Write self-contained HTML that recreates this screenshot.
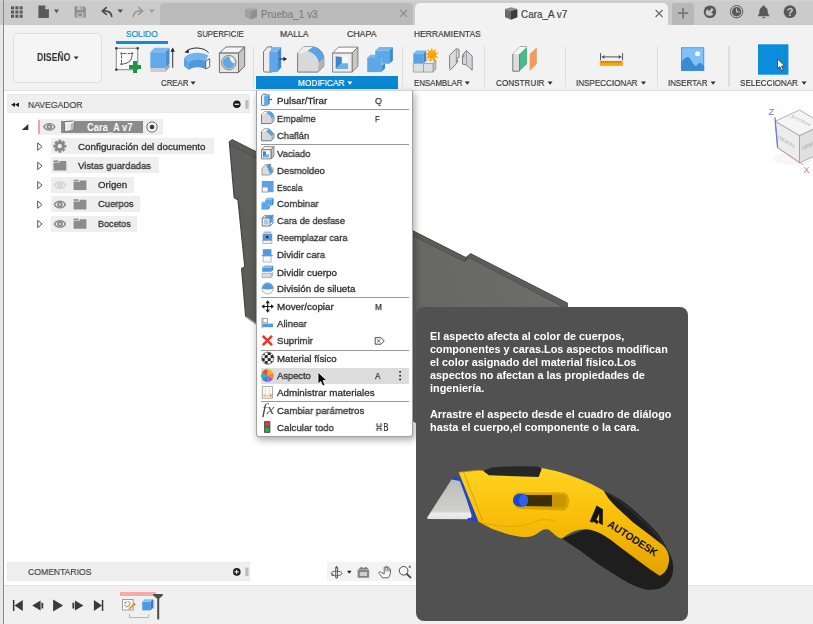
<!DOCTYPE html>
<html lang="es">
<head>
<meta charset="utf-8">
<title>Autodesk Fusion 360 - Cara_A v7</title>
<style>
html,body{margin:0;padding:0;background:#fff;}
body{width:813px;height:624px;overflow:hidden;position:relative;font-family:"Liberation Sans",sans-serif;}
#app{position:absolute;left:0;top:0;width:813px;height:624px;overflow:hidden;background:#fff;}
.b{position:absolute;box-sizing:border-box;}
.t{will-change:transform;position:absolute;white-space:nowrap;transform-origin:0 50%;letter-spacing:0;}
svg{position:absolute;left:0;top:0;overflow:visible;}
</style>
</head>
<body>
<div id="app">
<!-- ===== top application bar ===== -->
<div class="b" style="left:0;top:0;width:813px;height:24.5px;background:#cbcbcb;"></div>
<div class="b" style="left:0;top:0;width:813px;height:2px;background:linear-gradient(#d3d3d3,#cbcbcb);"></div>
<!-- inactive tab -->
<div class="b" style="left:160px;top:2.5px;width:252.5px;height:22px;background:#bababa;border-radius:4px 4px 0 0;"></div>
<!-- active tab -->
<div class="b" style="left:415.4px;top:2.5px;width:252.6px;height:23px;background:#f2f2f2;border-radius:5px 5px 0 0;"></div>
<!-- new tab button -->
<div class="b" style="left:672px;top:2.5px;width:21.7px;height:22px;background:#b8b8b8;border-radius:3px 3px 0 0;"></div>

<!-- ===== toolbar ===== -->
<div class="b" style="left:0;top:24.5px;width:813px;height:66.2px;background:#f2f2f2;border-bottom:1px solid #e0e0e0;"></div>
<div class="b" style="left:13.3px;top:33.3px;width:88.6px;height:49.4px;background:#f5f5f5;border:1px solid #dedede;border-radius:5px;"></div>
<div class="b" style="left:115.6px;top:41.3px;width:52.4px;height:2.5px;background:#0c8fd6;"></div>
<!-- group separators -->
<div class="b" style="left:253px;top:46px;width:1.2px;height:41px;background:#dedede;"></div>
<div class="b" style="left:401.5px;top:46px;width:1.2px;height:41px;background:#dedede;"></div>
<div class="b" style="left:484px;top:46px;width:1.2px;height:41px;background:#dedede;"></div>
<div class="b" style="left:564.6px;top:46px;width:1.2px;height:41px;background:#dedede;"></div>
<div class="b" style="left:656.5px;top:46px;width:1.2px;height:41px;background:#dedede;"></div>
<div class="b" style="left:728.4px;top:46px;width:1.2px;height:41px;background:#dedede;"></div>
<!-- MODIFICAR active -->
<div class="b" style="left:256.3px;top:76.3px;width:142px;height:13px;background:#0b86d3;"></div>

<!-- ===== 3D model in canvas ===== -->
<svg width="813" height="624" viewBox="0 0 813 624">
  <defs>
    <linearGradient id="mg" gradientUnits="userSpaceOnUse" x1="229" y1="330" x2="560" y2="200">
      <stop offset="0" stop-color="#595957"/><stop offset=".5" stop-color="#666664"/><stop offset="1" stop-color="#6f6f6c"/>
    </linearGradient>
  </defs>
  <!-- main face -->
  <path d="M229.3 141.6 L234.2 197.6 L238 200.1 L244.8 266.7 L241.6 268.6 L245.7 316.7 L256.6 324.4 L300 350 L418 424.5 L600 424.5 L600 312 L567.4 312 L567.4 303 L470.7 253.6 L465.8 257.4 L232.3 139.6 Z" fill="url(#mg)"/>
  <!-- thickness strip along the top edge -->
  <path d="M229.3 141.6 L232.3 139.6 L465.8 257.4 L470.7 253.6 L567.4 303 L567.4 307.4 L564 307.4 L469.6 257.6 L464.6 261.4 L230.4 144.6 Z" fill="#5c5c5a"/>
  <path d="M229.3 141.6 L232.3 139.6 L465.8 257.4 L470.7 253.6 L567.4 303 V307.4" fill="none" stroke="#3c3c3a" stroke-width=".7" stroke-linejoin="round"/>
  <path d="M230.4 144.8 L464.6 261.6 L469.6 257.8 L564 307.4" fill="none" stroke="#444442" stroke-width=".6" stroke-linejoin="round"/>
  <path d="M465.8 257.4 L464.8 261.4" fill="none" stroke="#444442" stroke-width=".8"/>
  <!-- left silhouette -->
  <path d="M229.3 141.6 L234.2 197.6 L238 200.1 L244.8 266.7 L241.6 268.6 L245.7 316.7" fill="none" stroke="#454543" stroke-width="1.2" stroke-linejoin="round"/>
  <path d="M245.7 316.7 L256.6 324.4" fill="none" stroke="#a5a5a2" stroke-width="1.4"/>
</svg>

<!-- ===== navigator panel ===== -->
<div class="b" style="left:7.4px;top:94.4px;width:242.2px;height:19px;background:#efefef;border:1px solid #eaeaea;"></div>
<div class="b" style="left:38px;top:120px;width:1.7px;height:14px;background:#f4a3a3;"></div>
<div class="b" style="left:39.7px;top:119.4px;width:123.3px;height:15.4px;background:#efefef;"></div>
<div class="b" style="left:61px;top:120.7px;width:81.7px;height:12.4px;background:#8b8b8b;"></div>
<div class="b" style="left:51px;top:137.9px;width:162.6px;height:15.8px;background:#efefef;"></div>
<div class="b" style="left:51px;top:157.3px;width:108.4px;height:15.8px;background:#efefef;"></div>
<div class="b" style="left:51px;top:176.9px;width:83px;height:15.8px;background:#efefef;"></div>
<div class="b" style="left:51px;top:196.4px;width:89.2px;height:15.8px;background:#efefef;"></div>
<div class="b" style="left:51px;top:215.9px;width:86px;height:15.8px;background:#efefef;"></div>

<!-- ===== bottom bars ===== -->
<div class="b" style="left:7.4px;top:562.4px;width:242.2px;height:19px;background:#efefef;border:1px solid #eaeaea;"></div>
<div class="b" style="left:326.7px;top:562.4px;width:90px;height:19px;background:#f3f3f3;"></div>
<div class="b" style="left:0;top:585px;width:813px;height:39px;background:#f0f0f0;border-top:1.7px solid #e1e1e1;"></div>
<div class="b" style="left:120.4px;top:591.8px;width:35.2px;height:4.6px;background:#f5aaa8;"></div>

<!-- ===== left window edge ===== -->
<div class="b" style="left:0;top:24.5px;width:3.4px;height:600px;background:#e8e8e8;"></div>
<div class="b" style="left:3.3px;top:0;width:1.2px;height:624px;background:#8a8a8a;"></div>

<!-- ===== dropdown menu ===== -->
<div class="b" style="left:256px;top:89.6px;width:157px;height:347.5px;background:#fff;border:1px solid #a2a2a2;border-top-color:#d5d5d5;border-radius:0 0 3px 3px;box-shadow:1.5px 3px 7px rgba(0,0,0,.33);"></div>
<div class="b" style="left:260.5px;top:367.5px;width:148.5px;height:16.3px;background:#dcdcdc;"></div>
<div class="b" style="left:260.5px;top:109.2px;width:148.5px;height:1px;background:#9a9a9a;"></div>
<div class="b" style="left:260.5px;top:144.1px;width:148.5px;height:1px;background:#9a9a9a;"></div>
<div class="b" style="left:260.5px;top:297.2px;width:148.5px;height:1px;background:#9a9a9a;"></div>
<div class="b" style="left:260.5px;top:349.5px;width:148.5px;height:1px;background:#9a9a9a;"></div>
<div class="b" style="left:260.5px;top:401.2px;width:148.5px;height:1px;background:#9a9a9a;"></div>

<!-- ===== tooltip ===== -->
<div class="b" style="left:416.1px;top:307.3px;width:271.9px;height:313.3px;background:#515151;border-radius:8px;"></div>

<!-- tooltip illustration : utility knife -->
<svg width="813" height="624" viewBox="0 0 813 624" font-family="Liberation Sans, sans-serif">
  <defs>
    <linearGradient id="kb" x1="0" y1="0" x2="0" y2="1">
      <stop offset="0" stop-color="#ffd322"/><stop offset=".45" stop-color="#f9bf0a"/><stop offset="1" stop-color="#e3a200"/>
    </linearGradient>
    <linearGradient id="kh" x1="0" y1="0" x2="1" y2="1">
      <stop offset="0" stop-color="#fcc712"/><stop offset="1" stop-color="#f2b300"/>
    </linearGradient>
    <linearGradient id="bl" x1="0" y1="0" x2="0" y2="1">
      <stop offset="0" stop-color="#bdbdb8"/><stop offset=".8" stop-color="#cfcfcb"/><stop offset=".86" stop-color="#ededed"/><stop offset="1" stop-color="#e2e2e2"/>
    </linearGradient>
  </defs>
  <!-- blade -->
  <path d="M426.9 517.9 L451.9 479.1 L461.3 480.8 L471.7 516.1 L470 519.2 L428 519 Z" fill="url(#bl)"/>
  <!-- blue blade carrier -->
  <path d="M451.9 477 L462.4 478.2 L478.6 521.3 L467.4 520.6 L467.8 518 L473.6 518.2 L459.8 481 L451.6 479.6 Z" fill="#1f45c9"/>
  <!-- rubber grip silhouette (black) -->
  <path d="M603.8 491 C610 493.6 616 496.6 621.3 500.3 C628 505 634 510 639.8 515.4 C646 521 651.6 526.4 656.1 531.6 C661 537.4 664.4 543 666.5 547.9 C669.4 553 671.6 557 672.4 561 C673.6 566 673.4 571 672.2 575 C670.4 581 666.6 585.4 661.4 587.8 C656 590 650 590.2 644.5 589.2 C640.4 588.2 636.6 586.8 632.9 585 C627 582.2 621.6 579 616.6 575.7 L598 564.1 L579.5 550.2 L562 538.6 L586 529 Z" fill="#1e1e1e"/>
  <path d="M607 493 C620 500 640 517 654 532 C662 541 667 550 669.4 557" stroke="#3a3a3a" stroke-width="1.2" fill="none" opacity=".7"/>
  <!-- yellow body -->
  <path d="M458.7 472.2 L478.6 470.2 L483 470.5 L541.4 467.9 C552 469.6 566 473 586.4 481.7 C594 485 600 488.4 603.8 491 C607 497 611 502 616.6 507.2 L632.9 522.3 L651.4 536.3 L662.6 545 C667 549 669.6 555 669 561 C668.2 568 665.4 573.4 659.6 575.8 L649.1 568.8 L616.6 544.4 C606 535.6 596 530 586.4 529.3 C577 529 571 531.6 562 538.6 C556 537.4 552 531 548 529.4 C544 528.6 541.6 530.4 538 533 C534 535.8 530 537.4 524 537 C514 536.4 503 533 492.3 529 L478.6 521.8 Z" fill="url(#kb)"/>
  <path d="M458.7 472.2 L478.6 470.2 L483 470.5" stroke="#b58600" stroke-width=".8" fill="none"/>
  <path d="M463.5 471.8 L482.6 520.6" stroke="#c99600" stroke-width=".9" fill="none" opacity=".8"/>
  <!-- top black insert -->
  <path d="M482.9 470.8 L492 467.4 C510 466 528 466 538.6 466.8 L541.8 468.8 L538.6 477 L488.9 475.3 Z" fill="#262626"/>
  <!-- slot -->
  <path d="M518 492.4 H563 C571 492.6 571 510 563 510.4 L520 509 C511 508 511 493 518 492.4 Z" fill="#d9a300"/>
  <path d="M522 495 H552 V506.6 L524 506 Z" fill="#3a2f05"/>
  <path d="M552 495 H562 C567.6 495.4 567.6 507.4 562 507.6 L552 506.6 Z" fill="#c79600"/>
  <!-- blue slider button -->
  <ellipse cx="519.6" cy="500.2" rx="6.6" ry="6.4" fill="#1a45cc"/>
  <path d="M519.6 493.8 H523.4 C529.4 494.4 529.4 506 523.4 506.6 H519.6 Z" fill="#1a45cc"/>
  <ellipse cx="523.6" cy="500.2" rx="4.6" ry="6.3" fill="#2f60ea"/>
  <!-- body shading line -->
  <path d="M478.6 521.8 C500 528 520 528 534 522 C542 518.6 550 519 556 522" stroke="#d49a00" stroke-width="1" fill="none" opacity=".6"/>
  <!-- logo -->
  <path d="M589.8 521.4 L596.6 505.6 L602.9 509.2 L602.7 525.2 L598.9 523 L599.2 513.8 L596.4 519.8 L598.8 521.2 L597.2 524 L593 521.4 L592.4 522.8 Z" fill="#141414"/>
  <text transform="translate(606.8 526) rotate(32.6)" font-size="10.4" font-weight="700" fill="#141414" textLength="57" lengthAdjust="spacingAndGlyphs">AUTODESK</text>
</svg>

<!-- text labels -->
<span class="t" style="left:260.7px;top:8px;line-height:12.17px;height:12.17px;font-size:11.3px;color:#7d7d7d;transform:scaleX(0.883);-webkit-text-stroke:.2px #7d7d7d;">Prueba_1 v3</span>
<span class="t" style="left:521.0px;top:8px;line-height:12.17px;height:12.17px;font-size:11.3px;color:#3c3c3c;transform:scaleX(0.878);-webkit-text-stroke:.2px #3c3c3c;">Cara_A v7</span>
<span class="t" style="left:125.5px;top:27px;line-height:13.35px;height:13.35px;font-size:9.6px;color:#1587d0;transform:scaleX(0.880);-webkit-text-stroke:.2px #1587d0;">SOLIDO</span>
<span class="t" style="left:196.7px;top:27px;line-height:13.35px;height:13.35px;font-size:9.6px;color:#383838;transform:scaleX(0.813);-webkit-text-stroke:.2px #383838;">SUPERFICIE</span>
<span class="t" style="left:280.0px;top:27px;line-height:13.35px;height:13.35px;font-size:9.6px;color:#383838;transform:scaleX(0.912);-webkit-text-stroke:.2px #383838;">MALLA</span>
<span class="t" style="left:347.0px;top:27px;line-height:13.35px;height:13.35px;font-size:9.6px;color:#383838;transform:scaleX(0.915);-webkit-text-stroke:.2px #383838;">CHAPA</span>
<span class="t" style="left:414.2px;top:27px;line-height:13.35px;height:13.35px;font-size:9.6px;color:#383838;transform:scaleX(0.885);-webkit-text-stroke:.2px #383838;">HERRAMIENTAS</span>
<span class="t" style="left:37.0px;top:51px;line-height:13.07px;height:13.07px;font-size:10px;color:#2e2e2e;font-weight:700;transform:scaleX(0.874);">DISEÑO</span>
<span class="t" style="left:161.0px;top:76px;line-height:13.35px;height:13.35px;font-size:9.6px;color:#383838;transform:scaleX(0.819);-webkit-text-stroke:.2px #383838;">CREAR</span>
<span class="t" style="left:298.0px;top:76px;line-height:13.35px;height:13.35px;font-size:9.6px;color:#ffffff;transform:scaleX(0.864);-webkit-text-stroke:.2px #fff;">MODIFICAR</span>
<span class="t" style="left:413.5px;top:76px;line-height:13.35px;height:13.35px;font-size:9.6px;color:#383838;transform:scaleX(0.819);-webkit-text-stroke:.2px #383838;">ENSAMBLAR</span>
<span class="t" style="left:496.0px;top:76px;line-height:13.35px;height:13.35px;font-size:9.6px;color:#383838;transform:scaleX(0.850);-webkit-text-stroke:.2px #383838;">CONSTRUIR</span>
<span class="t" style="left:576.4px;top:76px;line-height:13.35px;height:13.35px;font-size:9.6px;color:#383838;transform:scaleX(0.842);-webkit-text-stroke:.2px #383838;">INSPECCIONAR</span>
<span class="t" style="left:668.4px;top:76px;line-height:13.35px;height:13.35px;font-size:9.6px;color:#383838;transform:scaleX(0.829);-webkit-text-stroke:.2px #383838;">INSERTAR</span>
<span class="t" style="left:740.4px;top:76px;line-height:13.35px;height:13.35px;font-size:9.6px;color:#383838;transform:scaleX(0.843);-webkit-text-stroke:.2px #383838;">SELECCIONAR</span>
<span class="t" style="left:27.5px;top:98px;line-height:13.35px;height:13.35px;font-size:9.6px;color:#444;transform:scaleX(0.899);-webkit-text-stroke:.2px #444;">NAVEGADOR</span>
<span class="t" style="left:87.3px;top:121px;line-height:12.72px;height:12.72px;font-size:10.5px;color:#ffffff;font-weight:700;transform:scaleX(0.892);">Cara_A v7</span>
<span class="t" style="left:77.5px;top:140px;line-height:13.28px;height:13.28px;font-size:9.7px;color:#333333;transform:scaleX(1.012);-webkit-text-stroke:.3px #333;">Configuración del documento</span>
<span class="t" style="left:77.5px;top:159px;line-height:13.28px;height:13.28px;font-size:9.7px;color:#333333;transform:scaleX(0.977);-webkit-text-stroke:.3px #333;">Vistas guardadas</span>
<span class="t" style="left:97.7px;top:178px;line-height:13.28px;height:13.28px;font-size:9.7px;color:#333333;-webkit-text-stroke:.3px #333;">Origen</span>
<span class="t" style="left:97.7px;top:197px;line-height:13.28px;height:13.28px;font-size:9.7px;color:#333333;transform:scaleX(0.972);-webkit-text-stroke:.3px #333;">Cuerpos</span>
<span class="t" style="left:97.7px;top:217px;line-height:13.28px;height:13.28px;font-size:9.7px;color:#333333;transform:scaleX(0.934);-webkit-text-stroke:.3px #333;">Bocetos</span>
<span class="t" style="left:27.5px;top:565px;line-height:13.35px;height:13.35px;font-size:9.6px;color:#444;transform:scaleX(0.898);-webkit-text-stroke:.2px #444;">COMENTARIOS</span>
<span class="t" style="left:276.8px;top:94px;line-height:13.28px;height:13.28px;font-size:9.7px;color:#2f2f2f;transform:scaleX(1.010);-webkit-text-stroke:.3px #2f2f2f;">Pulsar/Tirar</span>
<span class="t" style="left:374.8px;top:94px;line-height:13.28px;height:13.28px;font-size:9.7px;color:#2f2f2f;transform:scaleX(0.914);-webkit-text-stroke:.25px #2f2f2f;">Q</span>
<span class="t" style="left:276.8px;top:112px;line-height:13.28px;height:13.28px;font-size:9.7px;color:#2f2f2f;transform:scaleX(0.946);-webkit-text-stroke:.3px #2f2f2f;">Empalme</span>
<span class="t" style="left:374.8px;top:112px;line-height:13.28px;height:13.28px;font-size:9.7px;color:#2f2f2f;transform:scaleX(0.777);-webkit-text-stroke:.25px #2f2f2f;">F</span>
<span class="t" style="left:276.8px;top:129px;line-height:13.28px;height:13.28px;font-size:9.7px;color:#2f2f2f;transform:scaleX(0.964);-webkit-text-stroke:.3px #2f2f2f;">Chaflán</span>
<span class="t" style="left:276.8px;top:147px;line-height:13.28px;height:13.28px;font-size:9.7px;color:#2f2f2f;transform:scaleX(0.974);-webkit-text-stroke:.3px #2f2f2f;">Vaciado</span>
<span class="t" style="left:276.8px;top:164px;line-height:13.28px;height:13.28px;font-size:9.7px;color:#2f2f2f;transform:scaleX(0.977);-webkit-text-stroke:.3px #2f2f2f;">Desmoldeo</span>
<span class="t" style="left:276.8px;top:181px;line-height:13.28px;height:13.28px;font-size:9.7px;color:#2f2f2f;transform:scaleX(0.877);-webkit-text-stroke:.3px #2f2f2f;">Escala</span>
<span class="t" style="left:276.8px;top:197px;line-height:13.28px;height:13.28px;font-size:9.7px;color:#2f2f2f;transform:scaleX(0.990);-webkit-text-stroke:.3px #2f2f2f;">Combinar</span>
<span class="t" style="left:276.8px;top:214px;line-height:13.28px;height:13.28px;font-size:9.7px;color:#2f2f2f;transform:scaleX(0.955);-webkit-text-stroke:.3px #2f2f2f;">Cara de desfase</span>
<span class="t" style="left:276.8px;top:231px;line-height:13.28px;height:13.28px;font-size:9.7px;color:#2f2f2f;transform:scaleX(0.954);-webkit-text-stroke:.3px #2f2f2f;">Reemplazar cara</span>
<span class="t" style="left:276.8px;top:248px;line-height:13.28px;height:13.28px;font-size:9.7px;color:#2f2f2f;transform:scaleX(0.993);-webkit-text-stroke:.3px #2f2f2f;">Dividir cara</span>
<span class="t" style="left:276.8px;top:266px;line-height:13.28px;height:13.28px;font-size:9.7px;color:#2f2f2f;transform:scaleX(1.013);-webkit-text-stroke:.3px #2f2f2f;">Dividir cuerpo</span>
<span class="t" style="left:276.8px;top:282px;line-height:13.28px;height:13.28px;font-size:9.7px;color:#2f2f2f;transform:scaleX(1.004);-webkit-text-stroke:.3px #2f2f2f;">División de silueta</span>
<span class="t" style="left:276.8px;top:300px;line-height:13.28px;height:13.28px;font-size:9.7px;color:#2f2f2f;transform:scaleX(1.014);-webkit-text-stroke:.3px #2f2f2f;">Mover/copiar</span>
<span class="t" style="left:374.8px;top:300px;line-height:13.28px;height:13.28px;font-size:9.7px;color:#2f2f2f;transform:scaleX(0.854);-webkit-text-stroke:.25px #2f2f2f;">M</span>
<span class="t" style="left:276.8px;top:317px;line-height:13.28px;height:13.28px;font-size:9.7px;color:#2f2f2f;transform:scaleX(0.985);-webkit-text-stroke:.3px #2f2f2f;">Alinear</span>
<span class="t" style="left:276.8px;top:334px;line-height:13.28px;height:13.28px;font-size:9.7px;color:#2f2f2f;transform:scaleX(0.995);-webkit-text-stroke:.3px #2f2f2f;">Suprimir</span>
<span class="t" style="left:276.8px;top:352px;line-height:13.28px;height:13.28px;font-size:9.7px;color:#2f2f2f;-webkit-text-stroke:.3px #2f2f2f;">Material físico</span>
<span class="t" style="left:276.8px;top:369px;line-height:13.28px;height:13.28px;font-size:9.7px;color:#2f2f2f;transform:scaleX(0.965);-webkit-text-stroke:.3px #2f2f2f;">Aspecto</span>
<span class="t" style="left:374.8px;top:369px;line-height:13.28px;height:13.28px;font-size:9.7px;color:#2f2f2f;transform:scaleX(0.850);-webkit-text-stroke:.25px #2f2f2f;">A</span>
<span class="t" style="left:276.8px;top:386px;line-height:13.28px;height:13.28px;font-size:9.7px;color:#2f2f2f;transform:scaleX(1.013);-webkit-text-stroke:.3px #2f2f2f;">Administrar materiales</span>
<span class="t" style="left:276.8px;top:404px;line-height:13.28px;height:13.28px;font-size:9.7px;color:#2f2f2f;transform:scaleX(0.988);-webkit-text-stroke:.3px #2f2f2f;">Cambiar parámetros</span>
<span class="t" style="left:276.8px;top:421px;line-height:13.28px;height:13.28px;font-size:9.7px;color:#2f2f2f;transform:scaleX(0.995);-webkit-text-stroke:.3px #2f2f2f;">Calcular todo</span>
<span class="t" style="left:374.8px;top:421px;line-height:13.08px;height:13.08px;font-size:10px;color:#2f2f2f;transform:scaleX(0.806);font-family:&quot;DejaVu Sans&quot;,&quot;Liberation Sans&quot;,sans-serif;">⌘B</span>
<span class="t" style="left:429.7px;top:330px;line-height:12.47px;height:12.47px;font-size:10.86px;color:#ffffff;font-weight:700;">El aspecto afecta al color de cuerpos,</span>
<span class="t" style="left:429.7px;top:343px;line-height:12.47px;height:12.47px;font-size:10.86px;color:#ffffff;font-weight:700;">componentes y caras.Los aspectos modifican</span>
<span class="t" style="left:429.7px;top:356px;line-height:12.47px;height:12.47px;font-size:10.86px;color:#ffffff;font-weight:700;">el color asignado del material físico.Los</span>
<span class="t" style="left:429.7px;top:369px;line-height:12.47px;height:12.47px;font-size:10.86px;color:#ffffff;font-weight:700;">aspectos no afectan a las propiedades de</span>
<span class="t" style="left:429.7px;top:382px;line-height:12.47px;height:12.47px;font-size:10.86px;color:#ffffff;font-weight:700;">ingeniería.</span>
<span class="t" style="left:429.7px;top:408px;line-height:12.47px;height:12.47px;font-size:10.86px;color:#ffffff;font-weight:700;">Arrastre el aspecto desde el cuadro de diálogo</span>
<span class="t" style="left:429.7px;top:421px;line-height:12.47px;height:12.47px;font-size:10.86px;color:#ffffff;font-weight:700;">hasta el cuerpo,el componente o la cara.</span>
<span class="t" style="left:261.6px;top:405px;line-height:10.55px;height:10.55px;font-size:14px;color:#4a4a4a;transform:scaleX(1.246);font-family:&quot;Liberation Serif&quot;,serif;font-style:italic;">fx</span>
<!-- ===== icons (inline SVG) ===== -->
<svg width="813" height="624" viewBox="0 0 813 624" font-family="Liberation Sans, sans-serif">
<!-- ---------- top application bar ---------- -->
<g fill="#5a5a5a">
  <!-- data panel grid -->
  <g>
    <rect x="11" y="6.3" width="3.1" height="3.1"/><rect x="15.3" y="6.3" width="3.1" height="3.1"/><rect x="19.6" y="6.3" width="3.1" height="3.1"/>
    <rect x="11" y="10.5" width="3.1" height="3.1"/><rect x="15.3" y="10.5" width="3.1" height="3.1"/><rect x="19.6" y="10.5" width="3.1" height="3.1"/>
    <rect x="11" y="14.7" width="3.1" height="3.1"/><rect x="15.3" y="14.7" width="3.1" height="3.1"/><rect x="19.6" y="14.7" width="3.1" height="3.1"/>
  </g>
  <!-- file -->
  <path d="M38.4 5.6 H45.3 L48.9 9.2 V18 H38.4 Z"/>
  <path d="M45.3 5.6 L48.9 9.2 H45.3 Z" fill="#d4d4d4"/>
  <path d="M53.9 9.4 H59.1 L56.5 13.2 Z"/>
  <!-- undo -->
  <path d="M117.6 9.6 H123 L120.3 13 Z" fill="#4f4f4f"/>
</g>
<!-- save -->
<g>
  <path d="M74.6 6.3 H84 L85.8 8.1 V17.5 H74.6 Z" fill="#8f8f8f"/>
  <rect x="77.2" y="6.3" width="5.8" height="3.6" fill="#c2c2c2"/>
  <rect x="80.6" y="6.9" width="1.4" height="2.4" fill="#8f8f8f"/>
  <rect x="76.8" y="12.4" width="6.8" height="5.1" fill="#bdbdbd"/>
  <rect x="78.3" y="13.6" width="3.8" height="2.6" fill="#8f8f8f"/>
</g>
<!-- undo / redo arrows -->
<path d="M103 11 C107.5 10.6 111.2 12 111.7 16.4" fill="none" stroke="#4a4a4a" stroke-width="1.7" stroke-linecap="round"/>
<path d="M106.2 7.6 L102.3 11.1 L106.4 14.3" fill="none" stroke="#4a4a4a" stroke-width="1.7" stroke-linecap="round" stroke-linejoin="round"/>
<path d="M142 11 C137.5 10.6 133.8 12 133.3 16.4" fill="none" stroke="#9a9a9a" stroke-width="1.6" stroke-linecap="round"/>
<path d="M138.8 7.6 L142.7 11.1 L138.6 14.3" fill="none" stroke="#9a9a9a" stroke-width="1.6" stroke-linecap="round" stroke-linejoin="round"/>
<path d="M149.2 9.6 H154.5 L151.8 13 Z" fill="#9a9a9a"/>
<!-- tab 1 (inactive) cube + close -->
<g opacity=".55">
  <path d="M245 9 L251.2 7.2 L257 9 L251 11 Z" fill="#9c9c9c"/>
  <path d="M245 9 L251 11 V19.5 L245 17 Z" fill="#8a8a8a"/>
  <path d="M251 11 L257 9 V17 L251 19.5 Z" fill="#6e6e6e"/>
</g>
<path d="M400.3 10 L407 16.8 M407 10 L400.3 16.8" stroke="#8a8a8a" stroke-width="1.1" fill="none"/>
<!-- tab 2 (active) cube + close -->
<path d="M505 9 L511.2 7.2 L517.4 9 L511 11 Z" fill="#8c8c8c"/>
<path d="M505 9 L511 11 V19.8 L505 17.2 Z" fill="#6a6a6a"/>
<path d="M511 11 L517.4 9 V17.2 L511 19.8 Z" fill="#3e3e3e"/>
<path d="M655.6 10 L662.6 17 M662.6 10 L655.6 17" stroke="#666" stroke-width="1.1" fill="none"/>
<!-- new tab + -->
<path d="M678 13.2 H688.2 M683.1 8 V18.4" stroke="#787878" stroke-width="1.8" fill="none"/>
<!-- extensions -->
<circle cx="710" cy="11.7" r="6.3" fill="#595959"/>
<path d="M706.3 14.8 C705.2 12.5 706 10.2 707.6 9.3 L709.4 11.3 L711.6 8 L713.6 9.6 L711.3 12.6 L713.3 14.2 C711.6 16.2 708.2 16.4 706.3 14.8 Z" fill="#c8c8c8"/>
<!-- job status clock -->
<circle cx="736.6" cy="11.7" r="6.2" fill="none" stroke="#595959" stroke-width="1"/>
<circle cx="736.6" cy="11.7" r="4.7" fill="#595959"/>
<path d="M736.6 8.6 V12 H739.6" stroke="#c8c8c8" stroke-width="1.1" fill="none"/>
<!-- notifications bell -->
<path d="M763.6 5.6 C764.4 5.6 764.9 6.2 764.9 6.9 C767 7.6 767.8 9.4 767.8 11.6 C767.8 13.6 768.4 14.6 769.3 15.4 V16.2 H757.9 V15.4 C758.8 14.6 759.4 13.6 759.4 11.6 C759.4 9.4 760.2 7.6 762.3 6.9 C762.3 6.2 762.8 5.6 763.6 5.6 Z" fill="#595959"/>
<path d="M762.2 17 H765 C765 17.8 764.4 18.3 763.6 18.3 C762.8 18.3 762.2 17.8 762.2 17 Z" fill="#595959"/>
<!-- help -->
<circle cx="790" cy="11.7" r="6.4" fill="#595959"/>
<text x="790" y="15.6" font-size="11" font-weight="700" text-anchor="middle" fill="#d0d0d0">?</text>

<!-- ---------- toolbar : CREAR ---------- -->
<!-- create sketch -->
<g>
  <rect x="116.3" y="48.3" width="21.4" height="21.4" fill="#fafafa" stroke="#858585" stroke-width="1"/>
  <g fill="#333"><rect x="115.2" y="47.2" width="2.2" height="2.2"/><rect x="136.6" y="47.2" width="2.2" height="2.2"/><rect x="115.2" y="68.6" width="2.2" height="2.2"/></g>
  <g fill="#444"><rect x="120.6" y="52.6" width="1.9" height="1.9"/><rect x="131.2" y="52.6" width="1.9" height="1.9"/><rect x="120.6" y="63.1" width="1.9" height="1.9"/></g>
  <path d="M123.4 53.5 H130.4 M121.5 55.4 V62.4" stroke="#555" stroke-width="1" stroke-dasharray="3 1.4" fill="none"/>
  <path d="M132.1 55.2 Q131.6 63 123.3 64" stroke="#555" stroke-width="1" fill="none"/>
  <path d="M133 61 H137 V65 H141 V69 H137 V73 H133 V69 H129 V65 H133 Z" fill="#1f9447"/>
</g>
<!-- extrude -->
<g>
  <path d="M150.3 68.1 H165.4 V72.1 H150.3 Z" fill="#cdcdcd"/>
  <path d="M165.4 72.1 L169.5 67.3 V63.3 L165.4 68.1 Z" fill="#a6a6a6"/>
  <path d="M150.3 52.2 H165.4 V68.1 H150.3 Z" fill="#62a9ea"/>
  <path d="M150.3 52.2 L154.3 47.8 H169.5 L165.4 52.2 Z" fill="#7bbaf0"/>
  <path d="M165.4 52.2 L169.5 47.8 V63.3 L165.4 68.1 Z" fill="#4a8ed2"/>
  <path d="M172.7 50.5 V67.8" stroke="#333" stroke-width="1" fill="none"/>
  <path d="M172.7 47.6 L170.5 51.8 H174.9 Z" fill="#222"/>
</g>
<!-- revolve -->
<g>
  <path d="M208.6 52.8 C204.5 47.2 192 46.4 186.6 51" stroke="#2a2a2a" stroke-width="1" fill="none"/>
  <path d="M184.4 52.6 L188.4 49.2 L189 52.9 Z" fill="#222"/>
  <path d="M184 58 C189 51.8 201 51.4 208.3 55.4 L205.7 61 C199.5 58.2 192.5 59.2 188.9 62.5 Z" fill="#6fb5ef"/>
  <path d="M184 58 L188.9 62.5 V69.9 L184 66 Z" fill="#5aa2e4"/>
  <path d="M188.9 62.5 C192.5 59.2 199.5 58.2 205.7 61 V69 C199.5 66.4 192.5 66.8 188.9 69.9 Z" fill="#4f98dc"/>
  <path d="M205.7 61 L209.7 58.7 V66.8 L205.7 69 Z" fill="#fafafa" stroke="#555" stroke-width=".9"/>
</g>
<!-- hole -->
<g stroke="#6e6e6e" stroke-width="1" stroke-linejoin="round">
  <path d="M219.4 53.1 L226 46.9 H244.7 L238.5 53.1 Z" fill="#f6f6f6"/>
  <path d="M238.5 53.1 L244.7 46.9 V66 L238.5 72.6 Z" fill="#c6c6c6"/>
  <path d="M219.4 53.1 H238.5 V72.6 H219.4 Z" fill="#e4e4e4"/>
  <circle cx="228.8" cy="62.6" r="7.2" fill="#d0d0d0" stroke="#888"/>
  <circle cx="228.8" cy="62.6" r="5.9" fill="#5ea6e8" stroke="none"/>
  <path d="M229.5 56.8 C233 57 234.8 60 234.6 63.6 C232 62.8 229.8 60.4 229.5 56.8 Z" fill="#fff" stroke="none"/>
</g>

<!-- ---------- toolbar : MODIFICAR ---------- -->
<defs>
  <g id="i-press">
    <path d="M263.5 51.7 L267.5 46.9 H272 V72.1 H264.6 L263.5 71 Z" fill="#ececec" stroke="#7a7a7a" stroke-width="1" stroke-linejoin="round" vector-effect="non-scaling-stroke"/>
    <path d="M269.3 51.7 H277.3 V72.1 H269.3 Z" fill="#5fa7e8"/>
    <path d="M269.3 51.7 L273.3 46.9 H281.2 L277.3 51.7 Z" fill="#78b8ef"/>
    <path d="M277.3 51.7 L281.2 46.9 V67.6 L277.3 72.1 Z" fill="#4389d0"/>
    <path d="M279.4 59 H284" stroke="#222" stroke-width="1" fill="none"/>
    <path d="M287 59 L283.4 56.8 V61.2 Z" fill="#222"/>
  </g>
  <g id="i-fillet">
    <path d="M297.6 72.1 V53.1 L303.8 46.9 H312.7 C318.6 47.6 323.2 51.8 323.8 57.9 V66.3 L318 72.1 Z" fill="#d9d9d9" stroke="#777" stroke-width="1" stroke-linejoin="round" vector-effect="non-scaling-stroke"/>
    <path d="M297.6 53.1 L303.8 46.9 H312.7 L307.8 50.4 C305 52.2 302 53 297.6 53.1 Z" fill="#efefef"/>
    <path d="M318.9 62.4 L323.8 57.9 V66.3 L318 72.1 Z" fill="#b3b3b3"/>
    <path d="M312.7 46.9 C318.6 47.6 323.2 51.8 323.8 57.9 L318.9 62.6 C318 57.4 313.6 52.4 307.6 51 Z" fill="#5aa3e6"/>
  </g>
  <g id="i-shell">
    <path d="M332.6 53.1 L338.4 47.1 H357.9 L352.1 53.1 Z" fill="#fbfbfb" stroke="#747474" stroke-width=".85" stroke-linejoin="round" vector-effect="non-scaling-stroke"/>
    <path d="M352.1 53.1 L357.9 47.1 V66.4 L352.1 72.1 Z" fill="#c7c7c7" stroke="#747474" stroke-width=".85" stroke-linejoin="round" vector-effect="non-scaling-stroke"/>
    <path d="M332.6 53.1 H352.1 V72.1 H332.6 Z" fill="#eeeeee" stroke="#747474" stroke-width=".85" stroke-linejoin="round" vector-effect="non-scaling-stroke"/>
    <path d="M335.7 56.2 H348.1 V69 H335.7 Z" fill="#f7f7f7"/>
    <path d="M335.7 56.2 L341.8 57 V63.3 L335.7 69 Z" fill="#3c84cc"/>
    <path d="M335.7 69 L341.8 63.3 H348.1 V69 Z" fill="#6bb1ee"/>
  </g>
  <g id="i-combine">
    <path d="M367.2 57.9 H381.4 V72.1 H367.2 Z" fill="#5fa8e8"/>
    <path d="M367.2 57.9 L370.4 54.8 H376 V57.9 Z" fill="#74b7ef"/>
    <path d="M381.4 65 L385 63.7 V68.6 L381.4 72.1 Z" fill="#3f8ad4"/>
    <path d="M375.2 50.4 H389.3 V63.7 H381.4 V57.9 H375.2 Z" fill="#5fa8e8"/>
    <path d="M375.2 50.4 L379.2 46.9 H392.9 L389.3 50.4 Z" fill="#74b7ef"/>
    <path d="M389.3 50.4 L392.9 46.9 V60.6 L389.3 63.7 Z" fill="#3f8ad4"/>
  </g>
</defs>
<use href="#i-press"/><use href="#i-fillet"/><use href="#i-shell"/><use href="#i-combine"/>

<!-- ---------- toolbar : ENSAMBLAR ---------- -->
<g>
  <path d="M413.3 63.3 H423.5 V72.1 H413.3 Z" fill="#dedede" stroke="#9a9a9a" stroke-width=".8"/>
  <path d="M423.5 63.3 H433.2 V72.1 H423.5 Z" fill="#dedede" stroke="#9a9a9a" stroke-width=".8"/>
  <path d="M423.5 63.3 L426.2 60.2 H435.9 L433.2 63.3 Z" fill="#f6f6f6" stroke="#9a9a9a" stroke-width=".8"/>
  <path d="M433.2 63.3 L435.9 60.2 V69 L433.2 72.1 Z" fill="#bdbdbd" stroke="#9a9a9a" stroke-width=".8"/>
  <path d="M413.3 53.5 H423.5 V63.3 H413.3 Z" fill="#5aa2e6"/>
  <path d="M413.3 53.5 L416.4 50.4 H426.2 L423.5 53.5 Z" fill="#78b8f0"/>
  <path d="M423.5 53.5 L426.2 50.4 V60.6 L423.5 63.3 Z" fill="#3f86ce"/>
  <path d="M431.9 47.2 L433 51.2 L436.3 48.7 L434.9 52.6 L439 52.7 L435.6 55 L438.6 57.8 L434.6 57.3 L435.2 61.4 L432.3 58.5 L430 61.8 L429.6 57.7 L425.7 58.9 L428.2 55.6 L424.6 53.6 L428.6 52.9 L427 49.1 L430.5 51.2 Z" fill="#ffa400"/>
</g>
<g stroke="#7d7d7d" stroke-width="1" stroke-linejoin="round">
  <path d="M449.6 55.3 L456.3 48.6 L459 49.5 V57.5 L456.3 58.4 V63.7 L450.5 69.9 L449.6 68.6 Z" fill="#dcdcdc"/>
  <path d="M456.3 48.6 V58.4" fill="none" stroke="#9c9c9c"/>
  <path d="M462.5 55.3 L466.5 50.4 L472.2 56.2 V70.3 L466.5 65 L462.5 64.1 Z" fill="#d6d6d6"/>
  <path d="M466.5 50.4 V65" fill="none" stroke="#9c9c9c"/>
</g>
<path d="M457.6 59.6 V62.6 M463.8 53.4 V57.2" stroke="#3f95e2" stroke-width="1.1" fill="none"/>

<!-- ---------- toolbar : CONSTRUIR ---------- -->
<g>
  <path d="M512.8 54 L519.9 46.9 H526.6 L519.5 54 V71.2 H512.8 Z" fill="#dddddd" stroke="#7a7a7a" stroke-width="1" stroke-linejoin="round"/>
  <path d="M512.8 54 L519.9 46.9 H526.6 L519.5 54 Z" fill="#f6f6f6"/>
  <path d="M519.9 54 L527 47.3 V64.1 L519.9 70.8 Z" fill="#4cb98a"/>
  <path d="M529.7 54 L536.8 47.3 V64.1 L529.7 70.8 Z" fill="#f09c5e"/>
</g>

<!-- ---------- toolbar : INSPECCIONAR ---------- -->
<g>
  <rect x="599.9" y="60.9" width="22.9" height="5" fill="#fba50a"/>
  <path d="M601.5 61 V62.6 M603.6 61 V62.6 M605.7 61 V62.6 M607.8 61 V62.6 M609.9 61 V62.6 M612 61 V62.6 M614.1 61 V62.6 M616.2 61 V62.6 M618.3 61 V62.6 M620.4 61 V62.6" stroke="#8a5a00" stroke-width=".8"/>
  <path d="M600.5 53.1 V60.2 M622.6 53.1 V60.2 M603 56.9 H620" stroke="#555" stroke-width="1" fill="none"/>
  <path d="M601.2 56.9 L604.4 55 V58.8 Z M621.9 56.9 L618.7 55 V58.8 Z" fill="#555"/>
</g>

<!-- ---------- toolbar : INSERTAR ---------- -->
<g>
  <rect x="681.1" y="47.5" width="23" height="23.3" fill="#7fc1f9"/>
  <path d="M681.1 62.4 C684 58.6 686.4 56.6 688.2 57.1 C691 58 693 65.4 695.7 65.9 C697.6 66 698.4 62.6 699.7 62.8 C701.4 63.2 702.6 65 704.1 66 V70.8 H681.1 Z" fill="#3b8bd3"/>
  <circle cx="697.6" cy="53.8" r="2.5" fill="#ffffd8"/>
  <rect x="681.4" y="47.8" width="22.4" height="22.7" fill="none" stroke="#3a8bd8" stroke-width=".7"/>
</g>

<!-- ---------- toolbar : SELECCIONAR ---------- -->
<g>
  <rect x="758" y="44.3" width="30.4" height="30.4" fill="#0a8de0"/>
  <rect x="760.4" y="47.8" width="22" height="16" fill="none" stroke="#1ea08c" stroke-width="1" stroke-dasharray="2.2 1.6" opacity=".75"/>
  <path d="M777.5 59 V68.6 L779.9 66.6 L781.8 71 L783.4 70.3 L781.5 66 L784.6 65.8 Z" fill="#fff" stroke="#333" stroke-width=".8" stroke-linejoin="round"/>
</g>
<!-- dropdown arrows next to group labels -->
<g fill="#2e2e2e">
  <path d="M73.7 56.4 H78.6 L76.15 59.4 Z"/>
  <path d="M190.6 81.6 H195.6 L193.1 84.8 Z"/>
  <path d="M464.8 81.6 H469.8 L467.3 84.8 Z"/>
  <path d="M547.6 81.6 H552.6 L550.1 84.8 Z"/>
  <path d="M641 81.6 H646 L643.5 84.8 Z"/>
  <path d="M710.6 81.6 H715.6 L713.1 84.8 Z"/>
  <path d="M801.6 81.6 H806.6 L804.1 84.8 Z"/>
</g>
<path d="M347.4 81.6 H352.4 L349.9 84.8 Z" fill="#fff"/>

<!-- ---------- navigator icons ---------- -->
<g fill="#1f1f1f">
  <path d="M11.1 104.7 L15 102.4 V107 Z M15 104.7 L19 102.4 V107 Z"/>
  <path d="M28.3 124 V129.9 H21.8 Z" fill="#333"/>
</g>
<circle cx="236.8" cy="104.3" r="3.8" fill="#1c1c1c"/>
<rect x="234.5" y="103.6" width="4.6" height="1.4" fill="#d8d8d8"/>
<rect x="245.3" y="100.2" width="3.2" height="8.6" fill="#bcbcbc"/>
<defs>
  <g id="i-eye">
    <path d="M0 3.8 C2.4 -1.4 10.4 -1.4 12.8 3.8 C10.4 9 2.4 9 0 3.8 Z M1.8 3.8 C3.8 7.4 9 7.4 11 3.8 C9 0.2 3.8 0.2 1.8 3.8 Z" fill-rule="evenodd"/>
    <path d="M6.4 1 A2.8 2.8 0 1 0 6.4 6.6 A2.8 2.8 0 1 0 6.4 1 Z M6.4 2.9 A0.9 0.9 0 1 1 6.4 4.7 A0.9 0.9 0 1 1 6.4 2.9 Z" fill-rule="evenodd"/>
  </g>
  <g id="i-folder">
    <path d="M0 0 H5 V1.6 H0 Z"/>
    <path d="M0 2.2 H6.2 V0.6 H12.8 V10.2 H0 Z"/>
  </g>
  <path id="i-tri" d="M0.5 0.5 L4.9 4.2 L0.5 7.9 Z" fill="#fff" stroke="#555" stroke-width="1" stroke-linejoin="round"/>
</defs>
<use href="#i-eye" x="42.9" y="123" fill="#8a8a8a"/>
<use href="#i-eye" x="53.5" y="200.7" fill="#8a8a8a"/>
<use href="#i-eye" x="53.5" y="220.1" fill="#8a8a8a"/>
<g opacity=".3"><use href="#i-eye" x="53.5" y="181.3" fill="#9a9a9a"/><path d="M55.5 180.6 L64.6 189.6" stroke="#9a9a9a" stroke-width="1"/></g>
<g fill="#8c8c8c">
  <use href="#i-folder" x="53.5" y="160.4"/>
  <use href="#i-folder" x="73.6" y="179.8"/>
  <use href="#i-folder" x="73.6" y="199.2"/>
  <use href="#i-folder" x="73.6" y="218.6"/>
</g>
<use href="#i-tri" x="37.2" y="142.4"/>
<use href="#i-tri" x="37.2" y="161.7"/>
<use href="#i-tri" x="37.2" y="181"/>
<use href="#i-tri" x="37.2" y="200.4"/>
<use href="#i-tri" x="37.2" y="219.8"/>
<!-- gear -->
<g transform="translate(59.8 146.2)" fill="#8a8a8a">
  <g id="teeth"><rect x="-1.5" y="-6.5" width="3" height="13"/><rect x="-6.5" y="-1.5" width="13" height="3"/></g>
  <use href="#teeth" transform="rotate(45)"/>
  <circle r="4.7"/>
  <circle r="2.1" fill="#ececec"/>
</g>
<!-- root component icon -->
<g>
  <path d="M64.4 123 Q64.4 121.6 65.8 121.5 L73 121 Q74.4 121 74.3 122.4 L73.6 128.6 Q73.4 130 72.2 130.4 L66.6 131.6 Q64.6 131.8 64.5 130.2 Z" fill="#e9e9ef" stroke="#6a6a6a" stroke-width=".9"/>
  <path d="M70.8 123.4 L73.9 121.4 L73.4 128.8 L70.6 131 Z" fill="#b9b9c4"/>
  <path d="M64.6 123.2 L70.8 123.4 L74 121.3" fill="none" stroke="#fff" stroke-width=".8"/>
</g>
<!-- activate radio -->
<circle cx="152" cy="127" r="5.2" fill="#f4f4f4" stroke="#6e6e6e" stroke-width="1"/>
<circle cx="152" cy="127" r="2.3" fill="#3a3a3a"/>

<!-- ---------- dropdown menu icons ---------- -->
<defs>
  <g id="i-chamfer">
    <path d="M297.6 72.1 V53.1 L303.8 46.9 H312.7 L323.8 57.9 V66.3 L318 72.1 Z" fill="#d9d9d9" stroke="#777" stroke-width="1" stroke-linejoin="round" vector-effect="non-scaling-stroke"/>
    <path d="M297.6 53.1 L303.8 46.9 H312.7 L307.4 52 Z" fill="#efefef"/>
    <path d="M318.9 62.8 L323.8 57.9 V66.3 L318 72.1 Z" fill="#b3b3b3"/>
    <path d="M312.7 46.9 L323.8 57.9 L318.9 62.8 L307.4 52 Z" fill="#5aa3e6"/>
  </g>
</defs>
<use href="#i-press" transform="translate(140.3 72.4) scale(.46)"/>
<use href="#i-fillet" transform="translate(119.5 89.2) scale(.477)"/>
<use href="#i-chamfer" transform="translate(119.5 106.4) scale(.477)"/>
<use href="#i-shell" transform="translate(98.5 123.6) scale(.49)"/>
<!-- draft -->
<g>
  <path d="M262 175 V168.4 L265.6 164.6 H269.4 L273 168.6 V172 L270 175 Z" fill="#dcdcdc" stroke="#8a8a8a" stroke-width=".8" stroke-linejoin="round"/>
  <path d="M266.4 165.4 L269.6 164.2 L273.2 171.2 L270.2 174.2 Z" fill="#4f9ae0"/>
  <path d="M269.6 164.2 L271 164.8" stroke="#333" stroke-width=".8"/>
</g>
<!-- scale -->
<rect x="261.8" y="181" width="11.8" height="11.2" fill="#5aa3e6"/>
<rect x="262.2" y="187" width="5.8" height="5" fill="#f6f6f6" stroke="#9a9a9a" stroke-width=".8"/>
<use href="#i-combine" transform="translate(88.9 175.8) scale(.47)"/>
<!-- offset face -->
<g>
  <path d="M265.4 214.9 H273.4 V222.6 H265.4 Z" fill="#5aa3e6"/>
  <path d="M262.2 218 H270 V226 H262.2 Z" fill="#eaf3fb" stroke="#6a6a6a" stroke-width=".9"/>
  <path d="M262.2 218 L265.4 214.9 M270 218 L273.4 214.9 M270 226 L273.4 222.6" stroke="#6a6a6a" stroke-width=".8" fill="none"/>
  <rect x="263.8" y="219.6" width="4.6" height="4.8" fill="#9ecbf3"/>
</g>
<!-- replace face -->
<g>
  <path d="M263.6 232.2 H271.2" stroke="#8a8a8a" stroke-width=".9"/>
  <rect x="262.6" y="233.6" width="9.6" height="7" fill="#4f9ae0"/>
  <rect x="262.9" y="240.6" width="9" height="2.9" fill="#f4f4f4" stroke="#9a9a9a" stroke-width=".7"/>
  <circle cx="267.2" cy="237" r="1.3" fill="#2b2b2b"/>
</g>
<!-- split face -->
<g>
  <rect x="262.8" y="249.2" width="8.6" height="6.2" fill="#4f9ae0"/>
  <rect x="263.1" y="256" width="8" height="6" fill="#f8f8f8" stroke="#a0a0a0" stroke-width=".7"/>
  <path d="M261.6 255.6 H272.8" stroke="#4f9ae0" stroke-width="1"/>
</g>
<!-- split body -->
<g>
  <path d="M262.2 273.2 H271.2 V277.6 H262.2 Z" fill="#dcdcdc" stroke="#9a9a9a" stroke-width=".7"/>
  <path d="M271.2 273.2 L273.2 271.6 V275.8 L271.2 277.6 Z" fill="#b8b8b8"/>
  <path d="M262.2 267.4 H271.2 V271.8 H262.2 Z" fill="#4f9ae0"/>
  <path d="M262.2 267.4 L264.2 265.4 H273.2 L271.2 267.4 Z" fill="#7bbaf0"/>
  <path d="M271.2 267.4 L273.2 265.4 V270 L271.2 271.8 Z" fill="#3b84cc"/>
</g>
<!-- silhouette split -->
<g>
  <circle cx="267.7" cy="288.4" r="5.6" fill="#fafafa" stroke="#9a9a9a" stroke-width=".8"/>
  <path d="M262.1 288.6 A5.6 5.6 0 0 1 273.3 288.6 C270 289.8 265.4 289.8 262.1 288.6 Z" fill="#4f9ae0"/>
</g>
<!-- move / copy -->
<g stroke="#1a1a1a" stroke-width="1.1" fill="#1a1a1a">
  <path d="M263.4 306.5 H272 M267.7 302.2 V310.8" fill="none"/>
  <path d="M267.7 300.2 L265.5 303.2 H269.9 Z M267.7 312.8 L265.5 309.8 H269.9 Z M261.4 306.5 L264.4 304.3 V308.7 Z M274 306.5 L271 304.3 V308.7 Z" stroke="none"/>
</g>
<!-- align -->
<g>
  <path d="M262 317.6 V328" stroke="#8e8e8e" stroke-width=".9"/>
  <rect x="262.9" y="318.6" width="4.6" height="4.2" fill="#fafafa" stroke="#8e8e8e" stroke-width=".8"/>
  <rect x="262.5" y="323.6" width="10.6" height="3.6" fill="#4f9ae0"/>
</g>
<!-- delete -->
<path d="M262.8 335.8 L272 345.2 M272 335.8 L262.8 345.2" stroke="#e8382c" stroke-width="2.6" stroke-linecap="butt" fill="none"/>
<!-- physical material (checker sphere) -->
<g>
  <clipPath id="cs"><circle cx="267.8" cy="358.2" r="6.1"/></clipPath>
  <circle cx="267.8" cy="358.2" r="6.1" fill="#f4f4f4"/>
  <g clip-path="url(#cs)" fill="#2a2a2a">
    <rect x="261.7" y="352.1" width="3" height="3"/><rect x="267.7" y="352.1" width="3" height="3"/>
    <rect x="264.7" y="355.1" width="3" height="3"/><rect x="270.7" y="355.1" width="3.2" height="3"/>
    <rect x="261.7" y="358.1" width="3" height="3"/><rect x="267.7" y="358.1" width="3" height="3"/>
    <rect x="264.7" y="361.1" width="3" height="3.2"/><rect x="270.7" y="361.1" width="3.2" height="3"/>
  </g>
  <circle cx="267.8" cy="358.2" r="6.1" fill="none" stroke="#555" stroke-width=".7"/>
</g>
<!-- appearance (colour wheel) -->
<g transform="translate(267.5 375.6)">
  <path d="M0 0 L0 -6.3 A6.3 6.3 0 0 1 5.46 -3.15 Z" fill="#f7b02c"/>
  <path d="M0 0 L5.46 -3.15 A6.3 6.3 0 0 1 5.46 3.15 Z" fill="#f5873a"/>
  <path d="M0 0 L5.46 3.15 A6.3 6.3 0 0 1 0 6.3 Z" fill="#9a5fd6"/>
  <path d="M0 0 L0 6.3 A6.3 6.3 0 0 1 -5.46 3.15 Z" fill="#3e7be6"/>
  <path d="M0 0 L-5.46 3.15 A6.3 6.3 0 0 1 -5.46 -3.15 Z" fill="#2fb590"/>
  <path d="M0 0 L-5.46 -3.15 A6.3 6.3 0 0 1 0 -6.3 Z" fill="#ea4a3c"/>
</g>
<!-- manage materials -->
<g>
  <rect x="262.3" y="386.6" width="10.2" height="11.6" fill="#fbfbfb" stroke="#9a9a9a" stroke-width=".8"/>
  <path d="M265.6 388 V395 M269.2 388 V395" stroke="#b8c4d8" stroke-width=".9" stroke-dasharray="1.4 1"/>
  <rect x="263.6" y="394.6" width="2" height="2" fill="#f0b400"/><rect x="266.6" y="395.2" width="2" height="1.6" fill="#c8c8c8"/><rect x="269.6" y="394.2" width="2" height="2.6" fill="#e88a3a"/>
</g>
<!-- traffic light -->
<g>
  <rect x="264" y="420.9" width="6.4" height="12.2" rx="1" fill="#5c5c5c"/>
  <circle cx="267.2" cy="424.2" r="2.1" fill="#f0382c"/>
  <circle cx="267.2" cy="429.9" r="2.1" fill="#27b24a"/>
</g>
<!-- "more" dots on hovered row -->
<g fill="#2a2a2a"><circle cx="400.1" cy="371.9" r=".95"/><circle cx="400.1" cy="375.7" r=".95"/><circle cx="400.1" cy="379.5" r=".95"/></g>
<!-- delete key glyph -->
<path d="M375.2 337.6 H381 L384.2 340.9 L381 344.2 H375.2 Z" fill="none" stroke="#3a3a3a" stroke-width=".9" stroke-linejoin="round"/>
<path d="M377 339.2 L380.2 342.6 M380.2 339.2 L377 342.6" stroke="#3a3a3a" stroke-width=".8"/>

<!-- ---------- comments bar / navigation bar ---------- -->
<circle cx="236.8" cy="571.9" r="3.8" fill="#1c1c1c"/>
<path d="M234.4 571.9 H238.8 M236.6 569.7 V574.1" stroke="#e8e8e8" stroke-width="1.1"/>
<rect x="245.3" y="567.6" width="3.2" height="8.6" fill="#bcbcbc"/>
<!-- orbit -->
<g stroke="#5a5a5a" stroke-width="1" fill="none">
  <ellipse cx="336.6" cy="573.4" rx="5.4" ry="2.3"/>
  <path d="M335.7 568.4 V577.6 M337.5 568.4 V577.6"/>
  <path d="M336.6 565.8 L334.4 568.6 H338.8 Z M336.6 578.8 L334.9 577.2 H338.3 Z" fill="#5a5a5a" stroke="none"/>
  <path d="M331 574.6 L333.2 575.8 L332.6 573.6" stroke-width=".9"/>
</g>
<path d="M347 570.8 H351.6 L349.3 573.8 Z" fill="#1f1f1f"/>
<!-- look at -->
<g>
  <path d="M358.2 569.6 L360.4 567.2 H362.6 L363.6 568.6 L364.6 567.2 H366.8 L368.8 569.6 Z" fill="#7a7a7a"/>
  <rect x="357.6" y="569.6" width="11.6" height="8.2" fill="#8a8a8a"/>
  <rect x="359.2" y="571.6" width="8.4" height="4.8" fill="#cfcfcf" stroke="#6a6a6a" stroke-width=".6"/>
</g>
<!-- pan hand -->
<g fill="#f6f6f6" stroke="#5a5a5a" stroke-width=".9" stroke-linejoin="round">
  <path d="M381.2 572.4 C380 571.2 378.4 572 379 573.4 L382.4 577.8 H388.4 C390 575.6 390.6 573 390.6 569.6 C390.6 568.6 389 568.6 389 569.6 V568 C389 567 387.4 567 387.4 568 V567 C387.4 566 385.8 566 385.8 567 V567.6 C385.8 566.6 384.2 566.6 384.2 567.6 V574 Z"/>
  <path d="M385.8 567 V571.4 M387.4 568 V571.4 M389 569.6 V571.8" fill="none" stroke-width=".7"/>
</g>
<!-- zoom -->
<g stroke="#4a4a4a" fill="none">
  <circle cx="403.6" cy="570.8" r="4.3" stroke-width="1" fill="#f8f8f8"/>
  <path d="M406.8 574 L410.6 577.6" stroke-width="1.8" stroke-linecap="round"/>
  <path d="M408.6 566.8 H411 M409.8 565.6 V568" stroke-width=".8"/>
</g>

<!-- ---------- timeline ---------- -->
<g fill="#3a3a3a">
  <path d="M12.9 600.1 H14.4 V611 H12.9 Z M22.8 600.1 V611 L14.6 605.55 Z"/>
  <path d="M40.6 600.6 V610.6 L32.2 605.6 Z M41.4 602.8 H43.2 V608.4 H41.4 Z"/>
  <path d="M53.1 599.5 L63.1 605.55 L53.1 611.6 Z"/>
  <path d="M74.9 600.6 V610.6 L83.4 605.6 Z M72.4 602.8 H74.2 V608.4 H72.4 Z"/>
  <path d="M93.9 600.1 V611 L102 605.55 Z M101.8 600.1 H103.3 V611 H101.8 Z"/>
</g>
<!-- timeline sketch feature -->
<g>
  <rect x="122.6" y="599.4" width="10.6" height="10.6" fill="#fbfbfb" stroke="#8a8a8a" stroke-width=".8"/>
  <path d="M125.2 602 H129.6 M125.2 602 V607" stroke="#666" stroke-width=".8" stroke-dasharray="1.6 1" fill="none"/>
  <path d="M130.4 602.6 Q130 606.6 125.8 607.2" stroke="#666" stroke-width=".8" fill="none"/>
  <path d="M128.2 610 L129 607.6 L133 603.8 L134.6 605.4 L130.6 609.2 Z" fill="#f0a040"/>
  <path d="M133 603.8 L134 602.8 L135.6 604.4 L134.6 605.4 Z" fill="#e45a4a"/>
</g>
<!-- timeline extrude feature -->
<g>
  <path d="M142.2 601.8 H150.6 V610.4 H142.2 Z" fill="#4f9ae4"/>
  <path d="M142.2 601.8 L144.6 599.2 H153 L150.6 601.8 Z" fill="#86c0f2"/>
  <path d="M150.6 601.8 L153 599.2 V607.8 L150.6 610.4 Z" fill="#2f7cc8"/>
  <path d="M153.8 599.6 V609" stroke="#8a8a8a" stroke-width=".7"/>
</g>
<path d="M129.4 614 V617.6 H148.6 V614" stroke="#b4b4b4" stroke-width="1" fill="none"/>
<!-- timeline marker -->
<path d="M153.2 593.9 H162.8 V595.4 L159.2 598.8 V619.4 H157.2 V598.8 L153.2 595.4 Z" fill="#4e4e4e"/>

<!-- ---------- view cube ---------- -->
<g>
  <ellipse cx="793" cy="159" rx="20" ry="6" fill="#000" opacity=".03"/>
  <path d="M775.1 121.3 L799.5 110 L823.9 124.4 L799.5 135.7 Z" fill="#f5f5f5" stroke="#9c9c9c" stroke-width=".8" stroke-linejoin="round"/>
  <path d="M775.1 121.3 L799.5 135.7 V162.9 L777.6 147.7 Z" fill="#ececec" stroke="#9c9c9c" stroke-width=".8" stroke-linejoin="round"/>
  <path d="M799.5 135.7 L823.9 124.4 V151.6 L799.5 162.9 Z" fill="#e0e0e0" stroke="#9c9c9c" stroke-width=".8" stroke-linejoin="round"/>
  <path d="M775 117.4 L777.6 147.7" stroke="#6f6fe8" stroke-width="1.2" fill="none"/>
  <path d="M777.6 147.7 L804.3 165.3" stroke="#f08a8a" stroke-width="1" fill="none" opacity=".8"/>
  <text x="768.6" y="114.6" font-size="9.5" fill="#7474ee">Z</text>
  <text x="803.6" y="173.2" font-size="9" fill="#f07474">X</text>
  <text transform="matrix(.861 .508 .094 .995 778.6 139)" font-size="5.6" fill="#a2a2a2" textLength="19" lengthAdjust="spacingAndGlyphs">FRONTAL</text>
  <text transform="matrix(.894 .447 -.907 .42 789.6 116.6)" font-size="5.2" fill="#a8a8a8" textLength="21" lengthAdjust="spacingAndGlyphs">SUPERIOR</text>
  <text transform="matrix(.907 -.42 0 1 802 150.6)" font-size="5.6" fill="#a2a2a2" textLength="20" lengthAdjust="spacingAndGlyphs">DERECHA</text>
</g>

<!-- ---------- mouse cursor ---------- -->
<path d="M318 372.2 V384 L320.7 381.5 L322.8 386 L325 385 L323 380.7 L326.8 380.4 Z" fill="#0a0a0a" stroke="#fff" stroke-width=".8" stroke-linejoin="round"/>
</svg>
</div>
</body>
</html>
